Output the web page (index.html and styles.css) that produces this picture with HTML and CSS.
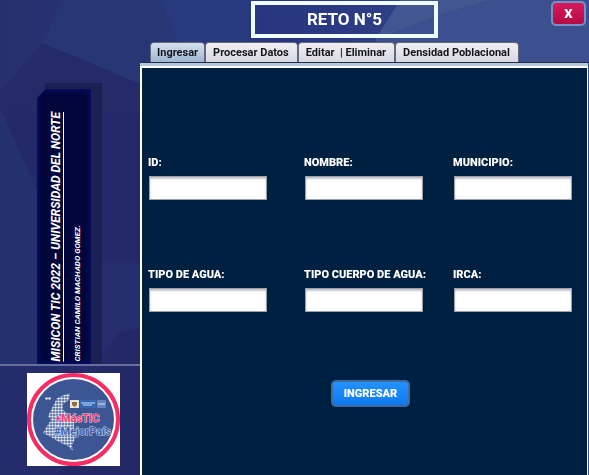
FILE: index.html
```html
<!DOCTYPE html>
<html lang="es">
<head>
<meta charset="utf-8">
<title>Reto N°5</title>
<link rel="stylesheet" href="styles.css">
</head>
<body>
<svg class="backdrop" viewBox="0 0 589 475" preserveAspectRatio="none" aria-hidden="true">
  <defs>
    <linearGradient id="sky" x1="0" y1="0" x2="1" y2="0">
      <stop offset="0" stop-color="#27306e"/>
      <stop offset="0.5" stop-color="#283780"/>
      <stop offset="1" stop-color="#3b5090"/>
    </linearGradient>
  </defs>
  <rect width="589" height="475" fill="url(#sky)"/>
  <path d="M62 0H160L180 42L140 84L42 43Z" fill="#273775"/>
  <path d="M160 0H260L240 66H190Z" fill="#293980"/>
  <path d="M42 43L140 84V117L0 107V92Z" fill="#252a69"/>
  <path d="M0 107L140 117V263L92 259L37 191Z" fill="#242969"/>
  <path d="M0 124L37 191L92 259L140 263V330L110 364H0Z" fill="#24316f"/>
  <path d="M92 259L140 263V328L118 333L100 364H60Z" fill="#252d6d"/>
  <path d="M118 333L140 328V475H60L100 364Z" fill="#232866"/>
  <path d="M0 364H100L60 475H0Z" fill="#252c6b"/>
  <path d="M375 40L440 15L490 0H589V66H388Z" fill="#3c4f8f"/>
  <path d="M440 15L490 0H400L375 40Z" fill="#42568f"/>
</svg>
<div class="app">
  <aside class="sidebar">
    <div class="banner">
      <div class="banner-face">
        <h2 class="banner-title">MISICON TIC 2022 – UNIVERSIDAD DEL NORTE</h2>
        <p class="banner-author">CRISTIAN CAMILO MACHADO GOMEZ.</p>
      </div>
    </div>
    <div class="brand">
      <svg class="logo" viewBox="0 0 93 93" role="img" aria-label="+MásTIC #MejorPaís">
        <defs>
          <pattern id="dots" width="3" height="3" patternUnits="userSpaceOnUse">
            <circle cx="1.5" cy="1.5" r="1.25" fill="#e4e9f4"/>
          </pattern>
        </defs>
        <rect width="93" height="93" fill="#fff"/>
        <circle cx="46.500" cy="46.500" r="44.500" fill="#fff" stroke="#f52d62" stroke-width="4"/>
        <circle cx="46.500" cy="46.500" r="40.500" fill="#3b5692"/>
        <path d="M30 25L37 22L43 20L42 27L36 31V37L42 42L47 44V62L48 66L45 72L46 78L41 73L32 69L24 64L16 60L20 53L24 47L21 43L24 37Z" fill="url(#dots)"/>
        <path d="M18 24h6v3h-6z" fill="url(#dots)"/>
        <rect x="43" y="27" width="9" height="8" fill="#e9e6dd"/>
        <path d="M45 29h5v3l-2.500 2l-2.500-2z" fill="#8b713d"/>
        <rect x="53" y="27" width="16" height="8" fill="#3268b5"/>
        <path d="M54 30h14M56 32h9" stroke="#cbdcf2" stroke-width="1"/>
        <rect x="70" y="27" width="9" height="8" fill="#6084c4"/>
        <path d="M71 31h7" stroke="#dbe6f5"/>
        <text class="logo-red" x="28" y="49">+MásTIC</text>
        <text class="logo-blue" x="27" y="62">#MejorPaís</text>
      </svg>
    </div>
  </aside>
  <main class="main">
    <header class="header">
      <h1 class="title">RETO N°5</h1>
      <button class="close" type="button" aria-label="Cerrar">X</button>
    </header>
    <nav class="tabs" role="tablist">
      <button class="tab tab-active" type="button" role="tab" aria-selected="true">Ingresar</button>
      <button class="tab" type="button" role="tab" aria-selected="false">Procesar Datos</button>
      <button class="tab" type="button" role="tab" aria-selected="false">Editar&nbsp; | Eliminar</button>
      <button class="tab" type="button" role="tab" aria-selected="false">Densidad Poblacional</button>
    </nav>
    <form class="panel">
      <div class="fields">
        <div class="field"><label for="id">ID:</label><input id="id" type="text"></div>
        <div class="field"><label for="nombre">NOMBRE:</label><input id="nombre" type="text"></div>
        <div class="field"><label for="municipio">MUNICIPIO:</label><input id="municipio" type="text"></div>
        <div class="field"><label for="tipo-agua">TIPO DE AGUA:</label><input id="tipo-agua" type="text"></div>
        <div class="field"><label for="tipo-cuerpo">TIPO CUERPO DE AGUA:</label><input id="tipo-cuerpo" type="text"></div>
        <div class="field"><label for="irca">IRCA:</label><input id="irca" type="text"></div>
      </div>
      <button class="submit" type="button">INGRESAR</button>
    </form>
  </main>
</div>
</body>
</html>
```
FILE: styles.css
```css
* {
  box-sizing: border-box;
}

body {
  margin: 0;
  background: #27306e;
  color: #fff;
  font-family: Roboto, "Liberation Sans", sans-serif;
}

h1,
h2,
p {
  margin: 0;
}

button,
input {
  font-family: inherit;
}

.backdrop {
  position: fixed;
  inset: 0;
  z-index: -1;
  width: 100%;
  height: 100%;
}

.app {
  display: grid;
  grid-template-columns: 140px 1fr;
  min-height: 100vh;
}

.sidebar {
  display: flex;
  flex-direction: column;
  padding-top: 83px;
}

.banner {
  width: 65px;
  margin-left: 37px;
  padding: 6px 11px 0 0;
  background: linear-gradient(#1c2154, #1c2154) 8px 0 no-repeat;
}

.banner-face {
  display: flex;
  gap: 8px;
  height: 275px;
  padding: 0 8px 2px 11px;
  align-items: flex-end;
  background: #03063a;
  box-shadow: inset 0 0 5px 2px #080e68;
  clip-path: polygon(9px 0, 100% 0, 100% 100%, 0 100%, 0 9px);
}

.banner-title,
.banner-author {
  writing-mode: vertical-rl;
  transform: rotate(180deg);
  font-style: italic;
  font-weight: 700;
  white-space: nowrap;
}

.banner-title {
  font-size: 12px;
  line-height: 16px;
  text-decoration: underline;
  text-decoration-thickness: 1px;
  text-underline-position: from-font;
  text-underline-offset: 0;
}

.banner-author {
  font-size: 8px;
  line-height: 12px;
}

.brand {
  flex: 1;
  padding: 7px 0 8px 27px;
  border-top: 2px solid #66709d;
}

.logo {
  display: block;
  width: 93px;
  height: 93px;
}

.logo-red,
.logo-blue {
  font-family: Roboto, sans-serif;
  font-size: 11px;
  font-weight: 700;
  paint-order: stroke;
}

.logo-red {
  fill: #ef3d72;
  stroke: #e4d3e5;
  stroke-width: 1px;
}

.logo-blue {
  fill: #3f65ae;
  stroke: #c8d4ec;
  stroke-width: 1px;
}

.main {
  display: flex;
  flex-direction: column;
}

.header {
  display: flex;
  align-items: flex-start;
  justify-content: space-between;
  padding: 1px 3px 4px 111px;
}

.title {
  width: 187px;
  border: 4px solid #f0fdff;
  font-size: 17px;
  font-weight: 700;
  line-height: 29px;
  text-align: center;
}

.close {
  width: 35px;
  height: 25px;
  padding: 0;
  border: 2px solid #7293c4;
  border-radius: 5px;
  background: linear-gradient(#d7185c, #b50c45);
  color: #fff;
  font-size: 13px;
  font-weight: 900;
  line-height: 20px;
}

.tabs {
  display: flex;
  padding-left: 10px;
  border-bottom: 1px solid #252c4b;
}

.tab {
  height: 20px;
  padding: 0 8px 0 7px;
  border: 1px solid #65677b;
  border-bottom: 0;
  border-radius: 4px 4px 0 0;
  background: linear-gradient(#efeff3, #d8d9e2);
  color: #15151c;
  font-size: 11px;
  font-weight: 700;
  line-height: 19px;
  white-space: nowrap;
}

.tab-active {
  padding: 0 6px;
  background: linear-gradient(#d5e0ed, #9eb7d1);
}

.panel {
  flex: 1;
  border: 2px solid #fff;
  border-width: 2px 1px 0 2px;
  padding: 87px 0 66px 6px;
  background: #002041;
  box-shadow: 0 -3px #b4c8dc;
  margin: 3px 1px 0 0;
}

.fields {
  display: grid;
  grid-template-columns: 156fr 149fr 134fr;
  row-gap: 67px;
}

.field {
  display: flex;
  flex-direction: column;
  gap: 5px;
}

.field label {
  font-size: 11px;
  font-weight: 900;
  line-height: 16px;
  white-space: nowrap;
}

.field input {
  width: 118px;
  height: 24px;
  margin-left: 1px;
  padding: 2px 6px;
  border: 1px solid #9ba0a9;
  background: #fff;
  box-shadow: inset 0 2px 2px #c4c6ca;
  font-size: 12px;
}

.submit {
  display: block;
  width: 79px;
  height: 27px;
  margin: 68px auto 0 183px;
  padding: 0;
  border: 2px solid #3f6aa0;
  border-radius: 5px;
  background: linear-gradient(#2491ff, #0f7af0);
  color: #fff;
  font-size: 11px;
  font-weight: 900;
}
```
